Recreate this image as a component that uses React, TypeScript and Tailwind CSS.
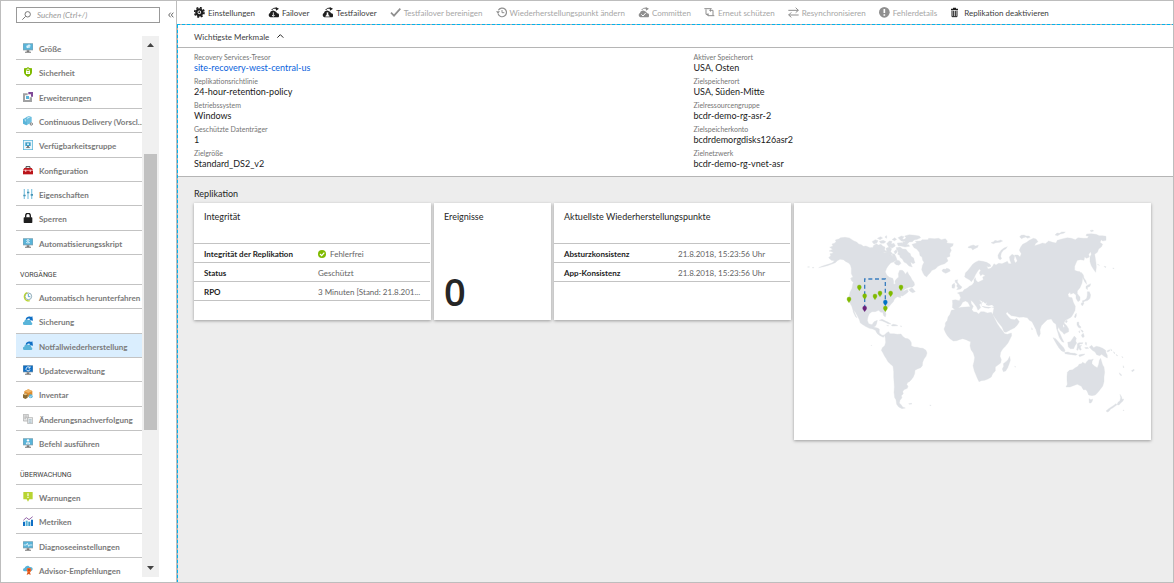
import type { ReactNode } from "react";

type IconProps = { children: ReactNode };

function Glyph({ children }: IconProps) {
  return (
    <svg viewBox="0 0 33 33" className="h-[11px] w-[11px] shrink-0" aria-hidden="true">
      {children}
    </svg>
  );
}

function MenuGlyph({ children }: IconProps) {
  return (
    <svg viewBox="0 0 30 30" className="h-[10px] w-[10px] shrink-0" aria-hidden="true">
      {children}
    </svg>
  );
}

/* ---------- menu icons ---------- */

function Monitor({ screen = "#59b4d9", children }: { screen?: string; children?: ReactNode }) {
  return (
    <MenuGlyph>
      <rect x="0" y="1" width="30" height="21" fill="#8c9ba3" />
      <rect x="1" y="2" width="28" height="18" fill={screen} />
      <path d="M11 22h8v4h5v3H6v-3h5z" fill="#7a7a7a" />
      {children}
    </MenuGlyph>
  );
}

const sizeIcon = (
  <Monitor>
    <path d="M10 8l8-4 5 3-2 7-7 2-5-3z" fill="#b8e3f5" />
    <path d="M14 10l6-3M14 10v5" stroke="#fff" strokeWidth="2" fill="none" />
  </Monitor>
);
const shieldIcon = (
  <MenuGlyph>
    <path d="M15 0l4 3 8 1v12c0 7-6 11-12 14C9 27 3 23 3 16V4l8-1z" fill="#7fba00" />
    <rect x="9" y="12" width="12" height="9" fill="#fff" />
    <path d="M11 13v-3a4 4 0 0 1 8 0v3" stroke="#fff" strokeWidth="2.5" fill="none" />
    <circle cx="15" cy="16" r="1.7" fill="#7fba00" />
  </MenuGlyph>
);
const extensionIcon = (
  <MenuGlyph>
    <path d="M0 4h14v6H6v14h14v-8h7v14H0z" fill="#a0a1a2" />
    <path d="M16 0h14v14h-6V7h-8z" fill="#804998" />
    <rect x="9" y="12" width="9" height="9" fill="#59b4d9" />
  </MenuGlyph>
);
const deliveryIcon = (
  <MenuGlyph>
    <path d="M0 9l9-4 5 2v19l-4 2-10-5z" fill="#59b4d9" />
    <path d="M8 4l10-4 8 3v14l-8 8-6-2z" fill="#6fc0e0" />
    <path d="M11 6l8-4 2 2-8 4zM4 11l4-2v9" fill="#fff" opacity=".75" />
    <circle cx="25" cy="24" r="3.5" fill="none" stroke="#7a7a7a" strokeWidth="3" />
  </MenuGlyph>
);
const availabilityIcon = (
  <MenuGlyph>
    <rect x="1" y="1" width="28" height="28" fill="#e8f4fa" stroke="#59b4d9" strokeWidth="2.5" />
    <rect x="7" y="7" width="16" height="11" fill="#3e9ec7" />
    <path d="M12 18h6v4h3v2H9v-2h3z" fill="#7a7a7a" />
    <path d="M12 11l3-2 3 2v4h-6z" fill="#d5eef8" />
  </MenuGlyph>
);
const toolboxIcon = (
  <MenuGlyph>
    <path d="M9 9V5h12v4" fill="none" stroke="#3f3f3f" strokeWidth="3" />
    <path d="M4 9h22l4 6H0z" fill="#ba141a" />
    <rect x="0" y="17" width="30" height="11" fill="#ba141a" />
    <rect x="0" y="14" width="30" height="3" fill="#e0696d" />
    <path d="M6 14h4v6H6zM20 14h4v6h-4z" fill="#f2c4c5" />
  </MenuGlyph>
);
const slidersIcon = (
  <MenuGlyph>
    <path d="M4 0v30M15 0v30M26 0v30" stroke="#8fcbe4" strokeWidth="4" />
    <path d="M1 17h7v5H1zM12 8h7v5h-7zM23 15h7v5h-7z" fill="#4694b5" />
  </MenuGlyph>
);
const lockIcon = (
  <MenuGlyph>
    <path d="M8 14V8a7 7 0 0 1 14 0v6" fill="none" stroke="#1e1e1e" strokeWidth="4" />
    <rect x="2" y="13" width="26" height="17" rx="2" fill="#1e1e1e" />
  </MenuGlyph>
);
const scriptIcon = (
  <Monitor>
    <path d="M15 4v13M10 9l5-5 5 5M9 15l5-4 7 4" stroke="#e4f5fc" strokeWidth="2.5" fill="none" />
  </Monitor>
);
const clockIcon = (
  <MenuGlyph>
    <circle cx="16" cy="13" r="10" fill="#fff" stroke="#7a9bab" strokeWidth="2.5" />
    <path d="M13 2A12 12 0 1 0 20 26" fill="none" stroke="#b8d432" strokeWidth="4" />
    <path d="M16 6v8h6" fill="none" stroke="#3999c6" strokeWidth="2.5" />
  </MenuGlyph>
);
const backupIcon = (
  <MenuGlyph>
    <path d="M5 27a5 5 0 0 1-1-10 7 7 0 0 1 12-5 6 6 0 0 1 8 7 4 4 0 0 1 0 8z" fill="#59b4d9" />
    <path d="M8 10C10 2 18 0 24 3l4-2 2 13-11-2 3-3c-4-3-8-2-11 2z" fill="#0f6fc5" />
  </MenuGlyph>
);
const updateIcon = (
  <Monitor screen="#0f6fc5">
    <path d="M20 8a6 6 0 1 0 1 5M21 4v5h-5" stroke="#fff" strokeWidth="2.5" fill="none" />
  </Monitor>
);
const inventoryIcon = (
  <MenuGlyph>
    <path d="M4 7l12-6 12 5v12l-10 6L4 18z" fill="#dd8b2c" />
    <path d="M4 7l12 5 12-6-12-5z" fill="#f0b668" />
    <path d="M0 16l8-3 6 3v10l-7 4-7-4z" fill="#8a6b33" />
    <path d="M0 16l7 3 7-3-6-3z" fill="#e9c586" />
    <circle cx="23" cy="22" r="6" fill="#59b4d9" />
    <path d="M20 22l2 3 4-5" stroke="#fff" strokeWidth="2" fill="none" />
  </MenuGlyph>
);
const changesIcon = (
  <MenuGlyph>
    <path d="M1 1h15v20H1z" fill="#e9e9e9" stroke="#a0a1a2" strokeWidth="2" />
    <path d="M4 6h9M4 10h9M4 14h5" stroke="#a0a1a2" strokeWidth="2" />
    <path d="M14 11h15v18H14z" fill="#f2f2f2" stroke="#a0a1a2" strokeWidth="2" />
    <path d="M17 17h9M17 21h9M17 25h9" stroke="#8aa9ba" strokeWidth="2" />
  </MenuGlyph>
);
const commandIcon = (
  <Monitor>
    <circle cx="15" cy="7" r="3.5" fill="#fff" />
    <path d="M9 19c0-10 12-10 12 0z" fill="#fff" />
    <path d="M15 12v6" stroke="#3999c6" strokeWidth="2" />
  </Monitor>
);
const alertIcon = (
  <MenuGlyph>
    <path d="M1 0h28v22H19l-4 7-4-7H1z" fill="#b8d432" />
    <path d="M15 4v9M15 15v3" stroke="#fff" strokeWidth="3.5" />
  </MenuGlyph>
);
const metricsIcon = (
  <MenuGlyph>
    <path d="M0 17h6v13H0z" fill="#0f6fc5" />
    <path d="M8 14h6v16H8z" fill="#59b4d9" />
    <path d="M16 17h6v13h-6z" fill="#3999c6" />
    <path d="M24 11h6v19h-6z" fill="#0f6fc5" />
    <path d="M1 13l9-8 8 6 11-9" fill="none" stroke="#804998" strokeWidth="2.5" />
  </MenuGlyph>
);
const diagnosticsIcon = (
  <Monitor>
    <path d="M2 12h8l3-5 4 9 2-4h9" stroke="#fff" strokeWidth="2.2" fill="none" />
  </Monitor>
);
const advisorIcon = (
  <MenuGlyph>
    <path d="M5 19a5 5 0 0 1 0-10C7 2 16-1 20 6c6-1 10 3 9 7s-4 6-6 6z" fill="#59b4d9" />
    <path d="M14 20l-3 10 6-3 6 3-2-9z" fill="#e05a1c" />
    <circle cx="18" cy="15" r="7" fill="#f0682a" />
    <circle cx="18" cy="15" r="3" fill="#c83c10" />
  </MenuGlyph>
);

type MenuItem = { label: string; icon: ReactNode; active?: boolean };

const settingsItems: MenuItem[] = [
  { label: "Größe", icon: sizeIcon },
  { label: "Sicherheit", icon: shieldIcon },
  { label: "Erweiterungen", icon: extensionIcon },
  { label: "Continuous Delivery (Vorscl...", icon: deliveryIcon },
  { label: "Verfügbarkeitsgruppe", icon: availabilityIcon },
  { label: "Konfiguration", icon: toolboxIcon },
  { label: "Eigenschaften", icon: slidersIcon },
  { label: "Sperren", icon: lockIcon },
  { label: "Automatisierungsskript", icon: scriptIcon },
];
const operationsItems: MenuItem[] = [
  { label: "Automatisch herunterfahren", icon: clockIcon },
  { label: "Sicherung", icon: backupIcon },
  { label: "Notfallwiederherstellung", icon: backupIcon, active: true },
  { label: "Updateverwaltung", icon: updateIcon },
  { label: "Inventar", icon: inventoryIcon },
  { label: "Änderungsnachverfolgung", icon: changesIcon },
  { label: "Befehl ausführen", icon: commandIcon },
];
const monitoringItems: MenuItem[] = [
  { label: "Warnungen", icon: alertIcon },
  { label: "Metriken", icon: metricsIcon },
  { label: "Diagnoseeinstellungen", icon: diagnosticsIcon },
  { label: "Advisor-Empfehlungen", icon: advisorIcon },
];

function MenuGroup({ title, items }: { title?: string; items: MenuItem[] }) {
  return (
    <section>
      {title && (
        <h2 className="flex h-[30px] items-end border-b border-[#c3c3c3] pb-1 pl-1 font-['Roboto',sans-serif] text-[7px] leading-[10px] text-[#404040]">
          {title}
        </h2>
      )}
      <ul>
        {items.map((item) => (
          <li key={item.label} className="h-[24px] border-b border-[#c3c3c3] nth-[3n+2]:h-[25px]">
            <a
              href="#"
              aria-current={item.active ? "page" : undefined}
              className={`flex h-full items-center gap-[6px] pl-[7px] text-[8px] leading-[12px] font-bold whitespace-nowrap text-[#7a7a7a] ${
                item.active ? "bg-[#daeefe]" : ""
              }`}
            >
              {item.icon}
              <span className="pt-[2px]">{item.label}</span>
            </a>
          </li>
        ))}
      </ul>
    </section>
  );
}

function Sidebar() {
  return (
    <aside className="flex w-[176px] shrink-0 flex-col border-r border-[#bdbdbd] pt-[6px] pb-[5px] pl-[15px]">
      <div className="flex items-center">
        <label className="flex h-[16px] w-[144px] items-center gap-[6px] border border-[#999] pl-[5px]">
          <svg viewBox="0 0 30 30" className="h-[9px] w-[9px]" fill="none" stroke="#6b6b6b" strokeWidth="3" aria-hidden="true">
            <circle cx="19" cy="11" r="9" />
            <path d="M12 18L1 29" />
          </svg>
          <input
            type="text"
            aria-label="Suchen"
            placeholder="Suchen (Ctrl+/)"
            className="w-0 flex-1 bg-transparent text-[8px] leading-[12px] italic outline-none placeholder:text-[#999]"
          />
        </label>
        <button type="button" aria-label="Menü einklappen" className="flex flex-1 justify-center pl-[5px]">
          <svg viewBox="0 0 18 18" className="h-[6px] w-[6px]" fill="none" stroke="#444" strokeWidth="2.5" aria-hidden="true">
            <path d="M8 2L2 9l6 7M16 2l-6 7 6 7" />
          </svg>
        </button>
      </div>
      <div className="mt-[13px] flex min-h-0 w-[143px] flex-1">
        <nav className="min-w-0 flex-1 overflow-hidden">
          <MenuGroup items={settingsItems} />
          <MenuGroup title="VORGÄNGE" items={operationsItems} />
          <MenuGroup title="ÜBERWACHUNG" items={monitoringItems} />
        </nav>
        <div className="flex w-[17px] flex-col items-center bg-[#f0f0f0] py-[7px]" aria-hidden="true">
          <svg viewBox="0 0 7 4" className="h-[4px] w-[7px]">
            <path d="M0 4L3.5 0 7 4z" fill="#444" />
          </svg>
          <div className="mt-[107px] h-[276px] w-[13px] bg-[#c1c1c1]" />
          <svg viewBox="0 0 7 4" className="mt-auto h-[4px] w-[7px]">
            <path d="M0 0h7L3.5 4z" fill="#444" />
          </svg>
        </div>
      </div>
    </aside>
  );
}

/* ---------- command bar ---------- */

const failoverCloud = (
  <>
    <path d="M7 31a7 7 0 0 1-1-13 9 9 0 0 1 15-5 8 8 0 0 1 6 6 6 6 0 0 1 1 12z" fill="currentColor" />
    <path d="M11 9c3-5 8-6 14-5" fill="none" stroke="currentColor" strokeWidth="3" />
    <path d="M23 0l10 5-9 6z" fill="currentColor" />
  </>
);

const commands: { label: string; enabled: boolean; icon: ReactNode }[] = [
  {
    label: "Einstellungen",
    enabled: true,
    icon: (
      <>
        <circle cx="16" cy="16" r="9" fill="none" stroke="currentColor" strokeWidth="7" />
        <circle cx="16" cy="16" r="14" fill="none" stroke="currentColor" strokeWidth="5" strokeDasharray="6 5" />
        <circle cx="16" cy="16" r="3" fill="currentColor" />
      </>
    ),
  },
  {
    label: "Failover",
    enabled: true,
    icon: (
      <>
        {failoverCloud}
        <path d="M16 16v12M12 24l4 4 4-4" fill="none" stroke="#fff" strokeWidth="2.5" />
      </>
    ),
  },
  {
    label: "Testfailover",
    enabled: true,
    icon: (
      <>
        {failoverCloud}
        <path d="M14 17h5M15 17v5l-4 6h11l-4-6v-5" fill="#fff" stroke="#fff" strokeWidth="1.5" />
      </>
    ),
  },
  {
    label: "Testfailover bereinigen",
    enabled: false,
    icon: <path d="M3 17l9 9L31 5" fill="none" stroke="currentColor" strokeWidth="5" />,
  },
  {
    label: "Wiederherstellungspunkt ändern",
    enabled: false,
    icon: (
      <>
        <path d="M7 10a13 13 0 1 1-1 10" fill="none" stroke="currentColor" strokeWidth="3.5" />
        <path d="M0 13h12l-6 7z" fill="currentColor" />
        <path d="M18 9v8h7" fill="none" stroke="currentColor" strokeWidth="3" />
      </>
    ),
  },
  {
    label: "Committen",
    enabled: false,
    icon: (
      <>
        {failoverCloud}
        <path d="M10 22l5 5 8-9" fill="none" stroke="#fff" strokeWidth="3" />
      </>
    ),
  },
  {
    label: "Erneut schützen",
    enabled: false,
    icon: (
      <>
        <path d="M1 5h22M6 7v15h8M27 26V10h-7M31 26H12" fill="none" stroke="currentColor" strokeWidth="3" />
        <path d="M13 18v10l-6-5zM21 5v10l-6-5z" fill="currentColor" />
      </>
    ),
  },
  {
    label: "Resynchronisieren",
    enabled: false,
    icon: (
      <path
        d="M1 10h30M23 2l8 8-8 7M32 24H2M10 16l-8 8 8 7"
        fill="none"
        stroke="currentColor"
        strokeWidth="3"
      />
    ),
  },
  {
    label: "Fehlerdetails",
    enabled: false,
    icon: (
      <>
        <circle cx="16" cy="16" r="16" fill="currentColor" />
        <path d="M16 6v12M16 22v4" stroke="#fff" strokeWidth="5" />
      </>
    ),
  },
  {
    label: "Replikation deaktivieren",
    enabled: true,
    icon: (
      <>
        <path d="M3 7h21M9 4h9" stroke="currentColor" strokeWidth="4" />
        <path d="M6 10v19h15V10M11 11v17M16 11v17" fill="none" stroke="currentColor" strokeWidth="3" />
      </>
    ),
  },
];

function CommandBar() {
  return (
    <div className="flex h-[23px] items-center gap-[13px] pl-[17px]">
      {commands.map((c) => (
        <button
          key={c.label}
          type="button"
          disabled={!c.enabled}
          className="group flex items-center gap-[3px] text-[8px] leading-[12px] whitespace-nowrap text-[#1e1e1e] disabled:text-[#8f8f8f]"
        >
          <Glyph>{c.icon}</Glyph>
          <span className="pt-[1px] text-[#3c3c3c] group-disabled:text-[#a6a6a6]">{c.label}</span>
        </button>
      ))}
    </div>
  );
}

/* ---------- essentials ---------- */

const leftFacts = [
  { label: "Recovery Services-Tresor", value: "site-recovery-west-central-us", link: true },
  { label: "Replikationsrichtlinie", value: "24-hour-retention-policy" },
  { label: "Betriebssystem", value: "Windows" },
  { label: "Geschützte Datenträger", value: "1" },
  { label: "Zielgröße", value: "Standard_DS2_v2" },
];
const rightFacts = [
  { label: "Aktiver Speicherort", value: "USA, Osten" },
  { label: "Zielspeicherort", value: "USA, Süden-Mitte" },
  { label: "Zielressourcengruppe", value: "bcdr-demo-rg-asr-2" },
  { label: "Zielspeicherkonto", value: "bcdrdemorgdisks126asr2" },
  { label: "Zielnetzwerk", value: "bcdr-demo-rg-vnet-asr" },
];

function Facts({ facts }: { facts: { label: string; value: string; link?: boolean }[] }) {
  return (
    <dl className="flex flex-col gap-[4px]">
      {facts.map((f) => (
        <div key={f.label}>
          <dt className="text-[7px] leading-[9px] text-[#757575]">{f.label}</dt>
          <dd className="text-[9px] leading-[11px] text-[#1a1a1a]">
            {f.link ? (
              <a href="#" className="text-[#0a62dc]">
                {f.value}
              </a>
            ) : (
              f.value
            )}
          </dd>
        </div>
      ))}
    </dl>
  );
}

function Essentials() {
  return (
    <section className="border-b border-[#b5b5b5] bg-white">
      <button
        type="button"
        className="flex h-[23px] w-full items-center gap-[8px] border-b border-[#b5b5b5] pl-4 text-[8px] leading-[12px] text-[#404040]"
      >
        <span className="pt-[2px]">Wichtigste Merkmale</span>
        <svg viewBox="0 0 21 12" className="h-[4px] w-[7px]" fill="none" stroke="#222" strokeWidth="3" aria-hidden="true">
          <path d="M1 11l9-9 9 9" />
        </svg>
      </button>
      <div className="grid grid-cols-2 pt-[5px] pb-[7px] pl-4">
        <Facts facts={leftFacts} />
        <div className="pl-[10px]">
          <Facts facts={rightFacts} />
        </div>
      </div>
    </section>
  );
}

/* ---------- replication tiles ---------- */

function Card({ title, className, children }: { title: string; className: string; children: ReactNode }) {
  return (
    <article className={`flex flex-col bg-white shadow-[0_1px_3px_rgba(0,0,0,0.35)] ${className}`}>
      <h3 className="h-[40px] pt-[8px] pl-[10px] text-[9px] leading-[12px] text-[#262626]">{title}</h3>
      {children}
    </article>
  );
}

function FactTable({ rows }: { rows: { name: string; value: string; ok?: boolean }[] }) {
  return (
    <div className="pr-[1px]">
      <table className="w-full table-fixed border-separate border-spacing-0 border-t border-[#c3c3c3] text-[8px] leading-[10px]">
        <tbody>
          {rows.map((r) => (
            <tr key={r.name} className="h-[19px]">
              <th scope="row" className="w-[124px] border-b border-[#c3c3c3] p-0 pt-[1px] pl-[10px] text-left font-bold text-[#1e1e1e]">
                {r.name}
              </th>
              <td className="border-b border-[#c3c3c3] p-0 pt-[1px] text-[#636363]">
                <span className="flex items-center gap-[4px] whitespace-nowrap">
                  {r.ok && (
                    <svg viewBox="0 0 24 24" className="h-[8px] w-[8px]" aria-hidden="true">
                      <circle cx="12" cy="12" r="12" fill="#7fba00" />
                      <path d="M6 12l5 5 8-9" fill="none" stroke="#fff" strokeWidth="3.5" />
                    </svg>
                  )}
                  {r.value}
                </span>
              </td>
            </tr>
          ))}
        </tbody>
      </table>
    </div>
  );
}

const land = [
  // North America with the Aleutians
  "M117 168L128 163 119 157 129 153 126 147 133 145 138 140 136 135 146 132 152 128 165 127 178 129 186 134 192 138 200 141 206 147 214 149 220 154 228 153 240 158 250 157 258 163 266 170 274 170 282 174 290 171 302 175 308 186 306 178 313 176 318 186 321 194 312 200 302 204 295 212 290 220 286 230 290 240 298 247 308 250 311 258 311 268 316 267 315 258 320 251 326 246 325 236 329 226 337 226 342 230 346 238 352 230 356 238 362 246 366 254 372 262 374 270 368 276 358 277 350 280 342 284 338 290 346 286 352 283 355 290 348 296 338 303 332 302 332 308 322 305 314 311 310 320 303 328 296 336 290 341 285 347 288 358 286 366 281 362 278 352 272 352 266 346 256 350 246 350 238 356 234 366 232 376 236 386 246 389 252 380 262 376 260 386 256 394 250 396 262 399 268 402 268 414 276 421 286 420 280 427 270 422 262 416 256 406 248 402 238 400 226 394 220 390 211 384 208 374 202 362 196 352 190 344 185 334 181 326 177 316 177 306 180 292 186 280 188 268 190 262 184 256 184 248 189 246 184 236 184 220 181 210 176 204 168 200 160 194 150 193 142 197 136 203 124 208 112 212 100 215 86 218 100 212 114 208 126 204 134 197 124 196 116 188 122 182 120 176 130 174 126 170z",
  "M52 216L58 215 58 217zM66 218L71 217 71 219zM187 336L192 348 196 358 201 368 197 366 190 352zM182 249L189 258 186 259zM356 284L366 278 376 290 368 293 362 290z",
  // Arctic archipelago
  "M250 152L259 146 265 150 273 148 279 154 285 156 284 164 290 170 280 173 271 170 262 172 256 166 248 164z",
  "M246 140L256 134 264 137 261 143 252 147zM262 130L272 125 278 129 270 134zM268 139L280 136 288 140 282 145 272 145zM286 124L290 122 290 130 286 128zM290 146L298 138 306 139 304 147 312 145 316 153 307 159 297 157zM288 160L297 156 305 161 302 170 308 176 299 179 290 171zM306 134L314 128 320 133 314 137zM312 170L319 163 322 171 316 177z",
  "M318 158L330 156 338 162 348 163 354 171 361 176 363 184 371 189 373 198 375 203 369 206 362 201 364 210 367 216 357 213 349 205 342 201 337 192 330 187 329 181 323 178 325 172zM312 203L320 195 328 197 333 205 327 211 318 209z",
  "M324 128L334 123 342 125 337 132 346 134 343 140 334 138zM344 123L358 119 374 121 388 123 392 128 382 133 372 135 367 140 358 141 350 149 340 149 338 142 346 140 342 134 348 128zM322 144L336 143 344 149 356 149 359 154 345 156 333 153 324 152z",
  // Greenland and Iceland
  "M366 148L380 144 376 139 392 138 396 134 414 134 416 130 434 131 446 130 454 134 466 131 472 138 470 144 490 146 488 153 480 158 484 166 479 176 480 184 470 188 474 198 464 206 452 210 444 214 436 222 426 226 420 234 414 240 410 246 403 241 399 234 395 224 397 212 402 202 398 196 396 186 390 182 388 172 380 162 372 158z",
  "M456 226L460 222 466 223 470 220 478 222 481 228 474 232 467 235 461 232 458 230z",
  // Caribbean
  "M268 376L276 373 287 378 295 382 303 387 294 386 286 382 277 378zM304 390L310 388 318 389 324 392 314 393 306 393zM290 391L296 392 294 393zM331 393L335 393 334 395z",
  // South America
  "M284 419L290 413 296 410 300 416 312 416 322 418 333 417 338 424 346 430 354 431 360 436 364 443 364 452 372 456 382 457 390 459 399 460 408 466 411 474 408 484 402 492 398 502 397 512 392 518 382 522 375 526 374 536 370 546 364 554 358 560 354 562 350 568 354 574 352 580 342 584 338 590 340 596 334 602 336 608 330 616 328 624 334 630 338 636 346 639 336 641 326 636 320 628 318 614 314 608 312 592 313 576 312 560 311 546 311 530 309 514 300 506 294 500 288 490 283 482 279 474 274 466 277 458 284 452 287 442 286 430z",
  "M356 626L364 625 366 627 358 628zM419 630L423 631 422 633zM243 451L245 451 245 453z",
  // Europe and Asia
  "M487 338L488 326 487 316 496 314 508 317 512 308 508 298 502 294 510 291 518 290 522 284 531 280 538 274 546 270 552 262 552 254 556 248 558 256 564 262 572 258 580 254 578 246 586 242 578 238 572 242 568 234 572 226 568 222 562 230 556 240 552 250 544 260 538 254 530 250 524 246 526 234 534 226 540 218 548 208 556 202 566 197 578 199 590 202 600 208 603 214 594 216 590 212 594 222 602 220 608 214 612 206 618 210 626 205 636 206 646 202 652 199 656 206 664 206 660 196 658 186 666 178 674 182 672 194 676 204 682 198 678 188 674 180 684 180 690 186 694 176 688 166 692 156 698 148 710 142 718 136 730 130 738 132 744 140 736 146 734 152 748 148 758 144 766 146 776 138 788 142 798 144 802 136 816 132 832 128 844 130 856 134 864 128 880 130 892 130 896 124 888 122 890 117 904 116 918 118 928 122 938 122 948 124 948 136 938 138 934 134 930 142 938 148 934 156 926 162 922 172 914 178 916 190 918 204 919 216 917 232 910 222 904 212 900 200 900 186 904 178 902 170 896 178 898 186 890 190 884 186 882 196 872 194 862 196 858 204 854 214 854 226 862 229 870 230 876 238 878 250 876 264 870 278 862 288 862 296 870 306 870 316 864 320 858 310 858 300 850 294 842 298 840 292 834 298 836 306 846 308 848 314 850 322 856 334 855 346 850 356 844 366 834 372 826 376 822 384 830 392 836 402 836 410 828 414 822 418 818 412 810 406 806 396 803 404 810 416 816 430 822 442 816 440 808 428 804 414 800 402 798 388 790 382 784 372 772 374 764 382 754 392 750 404 751 416 747 426 742 418 738 404 732 392 726 380 718 376 712 368 700 366 688 367 676 364 664 362 654 354 652 350 648 356 656 366 662 372 674 374 680 370 688 380 682 390 674 398 662 404 648 412 642 410 636 396 626 384 616 370 608 358 610 348 612 338 604 336 596 340 584 338 576 334 572 326 578 320 568 314 574 324 568 328 572 338 564 346 560 336 554 328 548 320 542 316 544 326 550 334 546 342 540 334 534 322 526 318 518 322 512 332 504 340 494 343z",
  "M495 256L503 254 502 261 509 270 516 276 512 282 500 284 504 278 500 274 502 267 496 262zM486 270L493 264 495 272 493 280 486 279z",
  "M534 156L542 152 550 150 557 153 565 151 563 157 554 161 548 165 544 159 536 159zM603 143L611 140 615 136 623 138 632 135 638 138 630 142 618 143 610 146zM625 190L624 181 628 173 634 165 642 159 652 155 648 161 640 166 634 174 632 184 635 191 630 194zM689 126L693 121 702 120 708 123 717 123 721 127 712 130 708 126 700 128 695 131zM795 120L801 114 809 115 815 111 826 111 821 115 811 117 803 122zM900 107L908 105 911 108 904 110z",
  // Africa and Madagascar
  "M484 346L492 344 502 340 514 337 526 336 538 335 546 336 546 344 550 350 560 352 566 357 572 350 582 350 592 354 604 352 610 362 616 374 622 386 630 398 638 408 644 416 652 418 664 414 665 422 660 432 654 444 646 454 638 462 632 472 630 484 634 494 632 504 624 510 616 516 616 528 608 536 604 546 594 552 584 556 574 557 567 560 562 550 558 540 553 528 549 512 552 500 554 488 550 474 543 464 540 452 542 440 536 438 528 434 518 431 508 434 500 437 490 438 480 431 472 422 466 412 462 402 466 392 466 384 472 376 474 366 480 358z",
  "M659 484L661 496 657 508 653 518 647 528 640 530 637 522 641 514 640 506 648 500 654 494zM725 398L727 402 726 405zM674 514L677 515 676 517z",
  // East Asian islands
  "M874 232L880 240 882 249 888 258 890 268 884 260 880 252 876 242zM888 274L894 270 902 266 900 274 893 277 892 284 888 280zM892 290L898 290 902 300 900 310 894 316 884 319 880 322 876 318 884 315 890 310 892 300zM874 324L880 322 882 324 878 332 874 330zM856 358L859 355 859 363 856 369 853 366zM826 378L831 376 832 380 828 384z",
  "M861 382L866 381 867 390 873 396 871 400 865 397 861 390zM872 404L877 406 880 410 877 412zM866 410L869 407 869 414zM874 420L880 415 883 424 879 428 876 425z",
  // South-east Asia
  "M789 428L797 431 805 440 813 449 821 458 825 466 823 471 815 468 807 459 799 446zM824 472L834 471 842 474 854 475 862 478 857 481 845 479 834 478 825 476zM866 480L875 478 885 477 880 481 869 485zM833 442L841 440 847 432 853 423 859 430 857 438 860 444 855 452 851 461 841 461 835 456z",
  "M862 446L867 443 879 443 877 446 868 447 869 452 875 451 871 456 874 464 870 466 866 458 864 466 860 465 862 453zM886 442L890 443 889 451 886 448zM884 458L892 457 896 460 888 461zM898 456L905 451 911 458 919 454 929 456 938 460 947 466 948 473 952 481 952 489 942 484 935 478 929 482 920 479 915 471 907 466 901 460zM952 467L959 464 959 468 952 471z",
  "M962 462L966 466 964 468zM970 470L975 474 973 476zM978 478L983 482 981 483zM996 484L999 488 997 488zM988 533L994 539 994 543 989 538zM1000 512L1002 518 999 517zM1024 527L1032 523 1033 526 1027 530zM922 208L928 210 928 211zM942 214L948 215 946 218zM968 219L972 220 971 222z",
  // Australia, Tasmania, New Zealand
  "M828 576L832 568 831 556 831 544 832 532 838 526 848 524 856 518 864 514 867 508 874 506 878 502 886 506 890 500 896 494 904 494 910 492 906 500 906 506 914 514 922 518 926 508 928 496 932 490 935 500 938 510 942 516 944 532 942 546 942 560 938 574 930 584 924 592 916 600 906 602 896 600 892 590 888 584 880 584 874 574 862 568 850 572 840 576z",
  "M897 611L903 614 908 612 907 618 903 624 898 624zM948 648L956 641 965 635 973 630 977 626 981 629 975 634 968 639 962 642 957 649 952 651zM981 629L984 622 990 617 992 608 990 598 995 606 996 613 1001 612 999 618 993 623 987 630zM999 645L1002 646 1001 648z",
].join("");

const seas =
  "M574 332L575 324 580 320 586 326 590 322 588 330 596 332 606 330 612 335 600 336 588 335zM822 398L819 393 819 388 823 394z";

const pins: [number, number, string][] = [
  [208, 278, "#7fba00"],
  [177, 314, "#7fba00"],
  [224, 304, "#7fba00"],
  [255, 305, "#7fba00"],
  [270, 296, "#7fba00"],
  [302, 296, "#7fba00"],
  [333, 278, "#7fba00"],
  [286, 341, "#7fba00"],
  [286, 323, "#0072c6"],
  [224, 341, "#68217a"],
];

function WorldMap() {
  return (
    <svg viewBox="12 24 1071 711" className="block w-full" role="img" aria-label="Weltkarte">
      <path d={land} fill="#dde0e5" stroke="#dde0e5" strokeWidth="1" />
      <path d={seas} fill="#fff" />
      <path d="M224 341V252H286V318" fill="none" stroke="#3b7fc0" strokeWidth="4" strokeDasharray="12 8" />
      {pins.map(([x, y, color]) => (
        <path
          key={`${x}-${y}`}
          transform={`translate(${x} ${y})`}
          d="M0 9C-2 5-6 3-6-2A6 6 0 0 1 6-2C6 3 2 5 0 9z"
          fill={color}
          stroke={color}
        />
      ))}
    </svg>
  );
}

function Replication() {
  return (
    <section className="flex-1 bg-[#ededed] pt-[11px] pr-[22px] pl-4">
      <h2 className="text-[9px] leading-[12px] text-[#262626]">Replikation</h2>
      <div className="mt-[3px] grid auto-rows-[117px] grid-cols-8 gap-[3px]">
        <Card title="Integrität" className="col-span-2">
          <FactTable
            rows={[
              { name: "Integrität der Replikation", value: "Fehlerfrei", ok: true },
              { name: "Status", value: "Geschützt" },
              { name: "RPO", value: "3 Minuten [Stand: 21.8.201..." },
            ]}
          />
        </Card>
        <Card title="Ereignisse" className="col-span-1">
          <p className="mt-auto pb-[9px] pl-[10px] font-['Open_Sans',sans-serif] text-[38px] leading-[40px] font-semibold text-[#262626]">
            0
          </p>
        </Card>
        <Card title="Aktuellste Wiederherstellungspunkte" className="col-span-2">
          <FactTable
            rows={[
              { name: "Absturzkonsistenz", value: "21.8.2018, 15:23:56 Uhr" },
              { name: "App-Konsistenz", value: "21.8.2018, 15:23:56 Uhr" },
            ]}
          />
        </Card>
        <article className="col-span-3 row-span-2 bg-white shadow-[0_1px_3px_rgba(0,0,0,0.35)]">
          <WorldMap />
        </article>
      </div>
    </section>
  );
}

export default function App() {
  return (
    <div className="flex h-screen border border-[#bdbdbd] bg-white font-['Lato','Open_Sans',sans-serif]">
      <Sidebar />
      <main className="flex min-w-0 flex-1 flex-col">
        <CommandBar />
        <div className="h-px shrink-0 bg-[repeating-linear-gradient(90deg,#00b4f0_0_3px,#b0b0b0_3px_5px)]" />
        <div className="flex min-h-0 flex-1">
          <div className="w-px shrink-0 bg-[repeating-linear-gradient(180deg,#00b4f0_0_3px,#b0b0b0_3px_5px)]" />
          <div className="flex min-w-0 flex-1 flex-col">
            <Essentials />
            <Replication />
          </div>
        </div>
      </main>
    </div>
  );
}
